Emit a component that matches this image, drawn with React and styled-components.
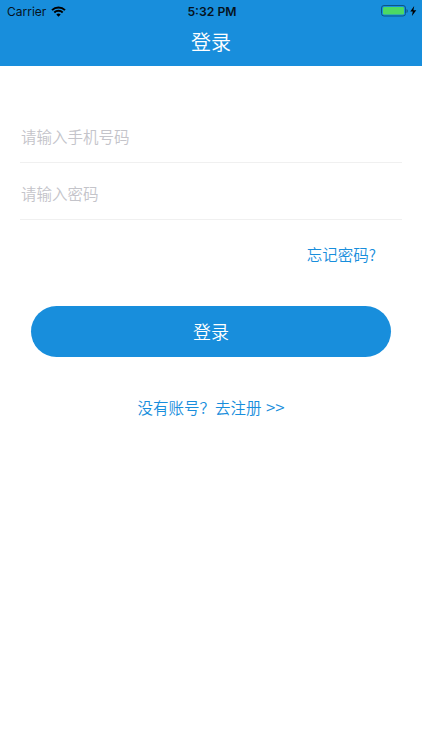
import React from "react";
import styled, { createGlobalStyle } from "styled-components";

const GlobalStyle = createGlobalStyle`
  * {
    box-sizing: border-box;
  }
  body {
    margin: 0;
    background: #fff;
    font-family: "Inter", "Noto Sans CJK SC", sans-serif;
  }
`;

const Screen = styled.div`
  width: 422px;
  height: 750px;
  overflow: hidden;
  background: #fff;
`;

const Header = styled.header`
  height: 66px;
  background: #188edc;
`;

const StatusBar = styled.div`
  display: grid;
  grid-template-columns: 1fr auto 1fr;
  align-items: center;
  height: 22px;
  padding: 0 5px 0 7px;
  color: #06131d;
  font-size: 12px;
`;

const Carrier = styled.div`
  display: flex;
  align-items: center;
  gap: 5px;
`;

const Time = styled.div`
  font-size: 12.2px;
  font-weight: 600;
`;

const Battery = styled.div`
  display: flex;
  align-items: center;
  justify-content: flex-end;
`;

const Title = styled.h1`
  margin: 0;
  color: #fff;
  font-family: "Noto Sans CJK SC", sans-serif;
  font-size: 20px;
  font-weight: 350;
  line-height: 40px;
  text-align: center;
`;

const Form = styled.form`
  display: flex;
  flex-direction: column;
  padding: 40px 21px 0;
  font-family: "Noto Sans CJK SC", sans-serif;
  font-weight: 350;
`;

const Input = styled.input`
  height: 57px;
  margin: 0 -1px;
  padding: 3px 1px 0;
  border: 0;
  border-bottom: 1px solid #f0f0f0;
  outline: none;
  font: inherit;
  font-size: 15.5px;

  &::placeholder {
    color: #c4c4ca;
    opacity: 1;
  }
`;

const Link = styled.a`
  align-self: ${props => props.align || "center"};
  margin: ${props => props.margin};
  color: #188edc;
  font-size: 15.5px;
  line-height: 24px;
`;

const Arrows = styled.span`
  margin-left: 1px;
  font-size: 17px;
  line-height: 1;
`;

const Button = styled.button`
  height: 51px;
  margin: 40px 10px 0;
  padding: 0 0 1px;
  border: 0;
  border-radius: 26px;
  background: #188edc;
  color: #fff;
  font: inherit;
  font-size: 18px;
`;

function App() {
  return (
    <Screen>
      <GlobalStyle />
      <Header>
        <StatusBar>
          <Carrier>
            Carrier
            <svg width="15" height="11" viewBox="0 0 15 11" fill="none" stroke="#000">
              <path d="M1 4.1a9.3 9.3 0 0 1 13 0" strokeWidth="2" />
              <path d="M3.3 6.5a6 6 0 0 1 8.4 0" strokeWidth="1.9" />
              <path d="M7.5 10.7L5.3 8.5a3.1 3.1 0 0 1 4.4 0z" fill="#000" stroke="none" />
            </svg>
          </Carrier>
          <Time>5:32 PM</Time>
          <Battery>
            <svg width="36" height="12" viewBox="0 0 36 12">
              <rect x="0.5" y="0.5" width="24" height="10.5" rx="2.5" fill="none" stroke="#0c5688" />
              <rect x="2" y="2" width="21" height="7.5" rx="1.2" fill="#4cd964" />
              <path d="M25.5 4v4q1.3-.6 1.3-2t-1.3-2z" fill="#0c5688" />
              <path d="M33.2 1L29.3 6.5h2.5L30.9 11l4.4-5.8h-2.9z" fill="#000" />
            </svg>
          </Battery>
        </StatusBar>
        <Title>登录</Title>
      </Header>
      <Form>
        <Input type="tel" placeholder="请输入手机号码" />
        <Input type="password" placeholder="请输入密码" />
        <Link align="flex-end" margin="22px 25px 0 0">忘记密码?</Link>
        <Button type="button">登录</Button>
        <Link margin="38px 0 0">
          没有账号？去注册 <Arrows>&gt;&gt;</Arrows>
        </Link>
      </Form>
    </Screen>
  );
}

export default App;
